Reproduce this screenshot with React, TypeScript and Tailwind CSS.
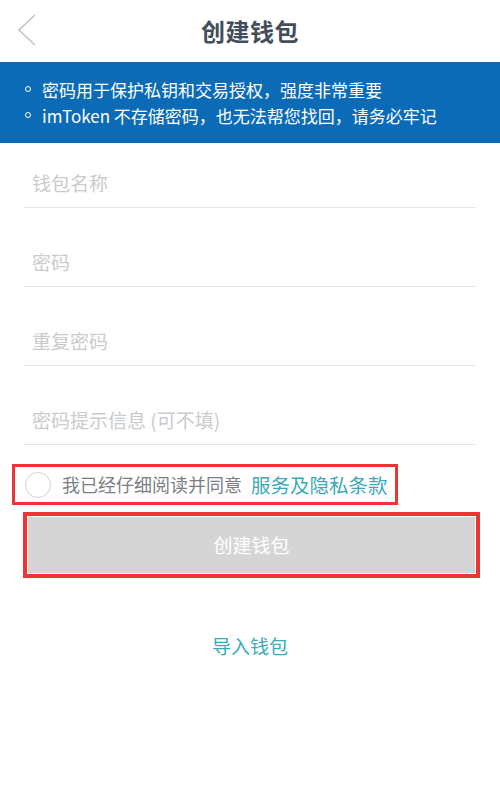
const fields = ['钱包名称', '密码', '重复密码', '密码提示信息 (可不填)'];

const notes = ['密码用于保护私钥和交易授权，强度非常重要', 'imToken 不存储密码，也无法帮您找回，请务必牢记'];

export default function App() {
  return (
    <div
      className="w-[500px] h-[812px] bg-white overflow-hidden"
      style={{ fontFamily: '"Noto Sans CJK SC", "Noto Sans", sans-serif' }}
    >
      {/* Header */}
      <div className="relative h-[62px] flex items-center justify-center">
        <svg className="absolute left-[17px] top-[14px]" width="20" height="32" viewBox="0 0 20 32" fill="none">
          <path d="M18 1 L2 16 L18 31" stroke="#c4c4c4" strokeWidth="1.6" />
        </svg>
        <h1 className="text-[24px] font-bold text-[#434e5a] tracking-[0.5px]">创建钱包</h1>
      </div>

      {/* Notice banner */}
      <div className="h-[81px] bg-[#0b6bb6] flex flex-col justify-center pl-[25px] pt-[1px]">
        {notes.map((n) => (
          <div key={n} className="flex items-center text-white text-[17px] leading-[26px]">
            <span className="w-[6px] h-[6px] rounded-full border-[1.5px] border-white mr-[11px] mt-[-2px]" />
            <span>{n}</span>
          </div>
        ))}
      </div>

      {/* Fields */}
      <div className="px-[24px]">
        {fields.map((f, i) => (
          <div
            key={f}
            className={`${i === 0 ? 'h-[65px]' : 'h-[79px]'} flex items-end pb-[12px] pl-[8px] border-b border-[#e6e6e6]`}
          >
            <span className="text-[19px] leading-[24px] text-[#c9cbcd]">{f}</span>
          </div>
        ))}
      </div>

      {/* Agreement */}
      <div className="mt-[19px] ml-[12px] w-[386px] h-[41px] border-[3px] border-[#ee3535] flex items-center pl-[10px]">
        <span className="w-[26px] h-[26px] rounded-full border border-[#d2d2d2] mr-[11px]" />
        <span className="text-[18px] text-[#7b7f85]">我已经仔细阅读并同意</span>
        <span className="text-[19.5px] text-[#3aa9b8] ml-[9px]">服务及隐私条款</span>
      </div>

      {/* Create button */}
      <div className="mt-[7px] ml-[23px] w-[457px] h-[66px] border-[4px] border-[#ee3535] bg-white p-[1px]">
        <div className="w-full h-full bg-[#d5d5d5] flex items-center justify-center">
          <span className="text-[19px] text-white">创建钱包</span>
        </div>
      </div>

      {/* Import */}
      <div className="mt-[56px] flex justify-center">
        <span className="text-[19px] leading-[24px] text-[#3aa9b8]">导入钱包</span>
      </div>
    </div>
  );
}
